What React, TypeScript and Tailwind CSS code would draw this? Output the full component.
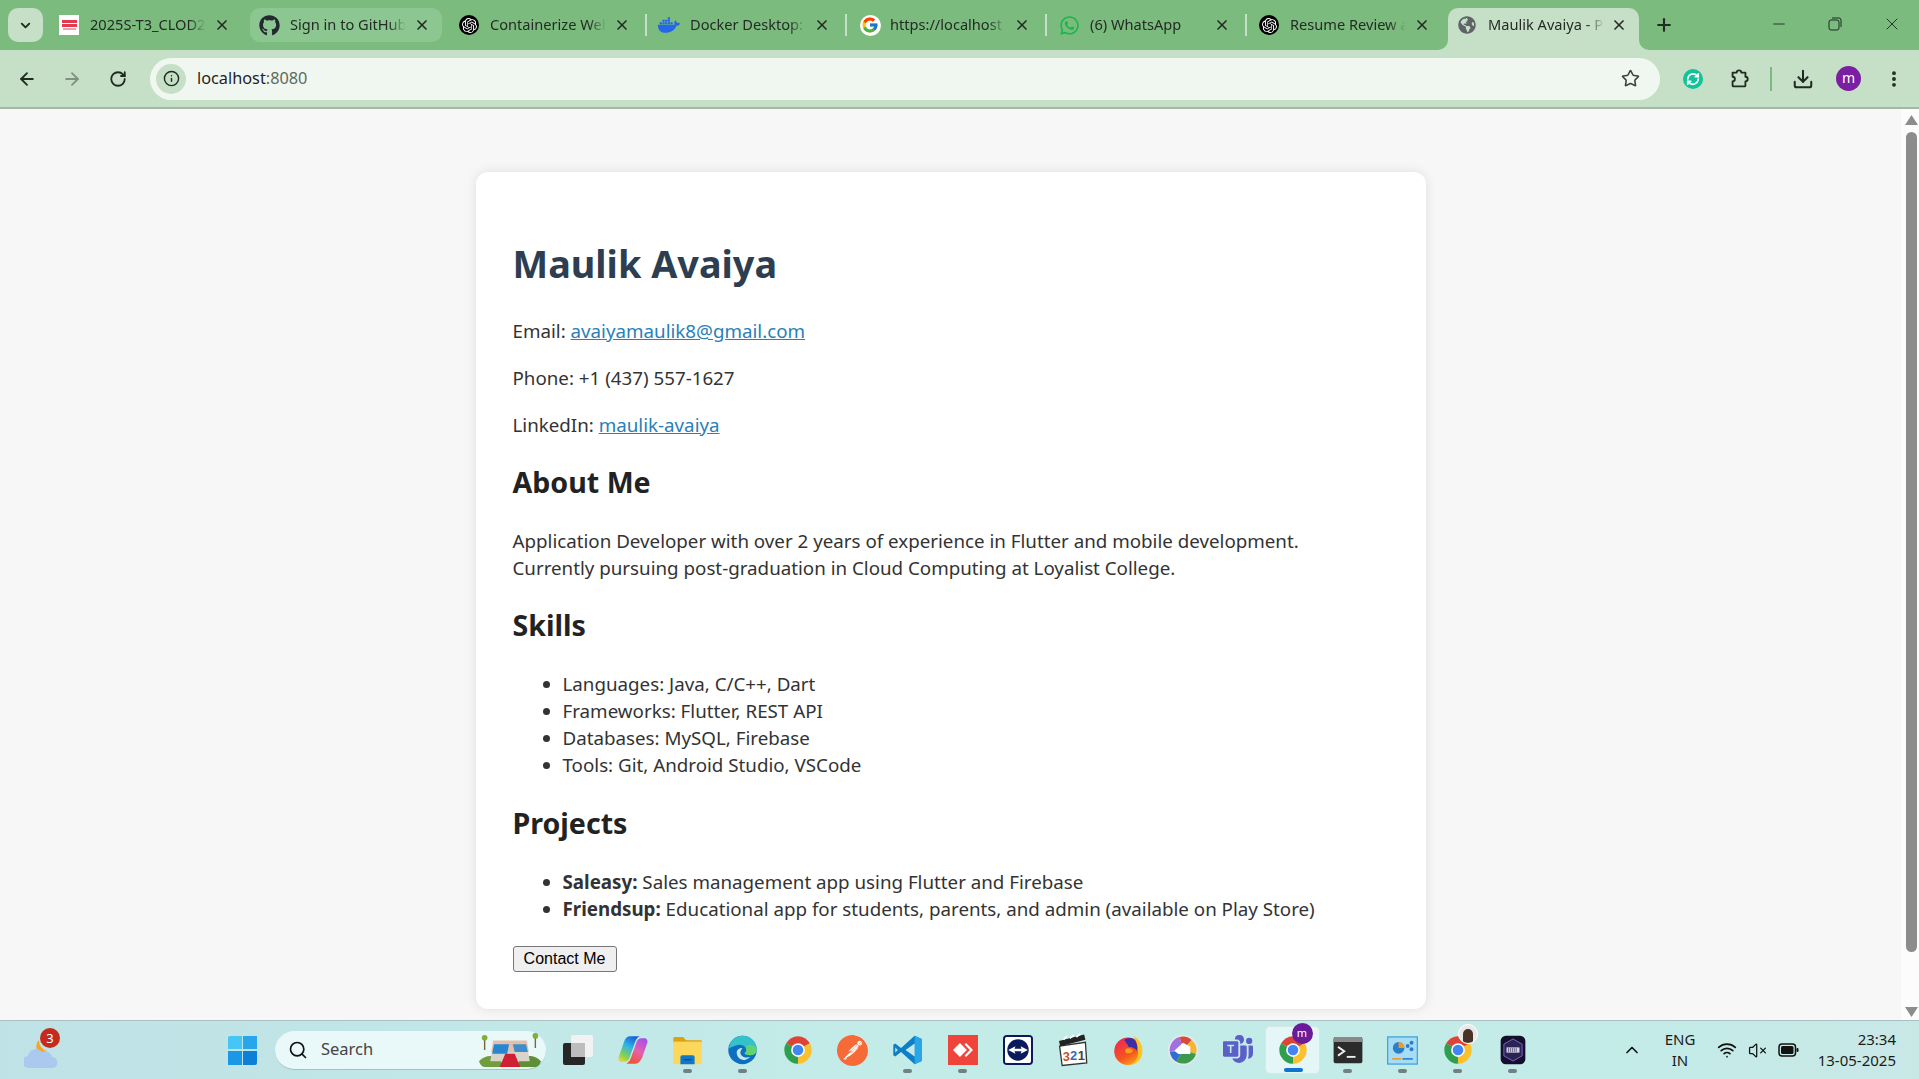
import { ReactNode } from "react";
import { FaGithub, FaDocker, FaWhatsapp, FaGlobeAmericas } from "react-icons/fa";
import { FcGoogle } from "react-icons/fc";
import { SiOpenai, SiPostman, SiAnydesk, SiTeamviewer } from "react-icons/si";
import { BsMicrosoftTeams } from "react-icons/bs";
import { ArrowLeft, ArrowRight, RotateCw, RefreshCw, Info, Star, Download, EllipsisVertical, X, Plus, Minus, ChevronDown, ChevronUp, Search, Wifi, VolumeX } from "lucide-react";

function ChromeLogo({ size = 30 }: { size?: number }) {
  return (
    <svg width={size} height={size} viewBox="0 0 48 48">
      <path d="M24 24 L5 13 A22 22 0 0 1 43 13 Z" fill="#db4437" />
      <path d="M24 24 L43 13 A22 22 0 0 1 24 46 Z" fill="#fbc02d" />
      <path d="M24 24 L24 46 A22 22 0 0 1 5 13 Z" fill="#2f9e4f" />
      <circle cx="24" cy="24" r="11" fill="#fff" />
      <circle cx="24" cy="24" r="8.5" fill="#4285f4" />
    </svg>
  );
}

function EdgeLogo() {
  return (
    <svg width="31" height="32" viewBox="0 0 48 48">
      <circle cx="24" cy="24" r="22" fill="#0c6fc0" />
      <path d="M3 22C4 10 13 2 24 2c12 0 22 9 22 21 0 6-5 9-10 9-4 0-8-1-9-3 3-2 4-5 2-8-3-5-10-6-15-4C9 19 5 20 3 22z" fill="#35c1c9" />
      <path d="M33 16c6 1 13 2 13 8 0 6-5 8-10 8-4 0-8-1-9-3 3-2 4-5 2-8z" fill="#62d36e" />
      <path d="M15 28c0 8 7 13 14 11 3-1 5-2 7-4-6 2-13 0-15-5-1-3 1-7 3-9-5 0-9 3-9 7z" fill="#c3eae8" />
    </svg>
  );
}

function FolderLogo() {
  return (
    <svg width="31" height="32" viewBox="0 0 48 48">
      <path d="M2 6a2 2 0 0 1 2-2h13l5 5h24v4H2z" fill="#dca30f" />
      <path d="M2 11h44v35H2z" fill="#fbd75b" />
      <path d="M13 35a3 3 0 0 1 3-3h16a3 3 0 0 1 3 3v11H13z" fill="#0f78c8" />
      <path d="M18 39h12" stroke="#0a4f8c" strokeWidth="2" />
    </svg>
  );
}

function CopilotLogo() {
  return (
    <svg width="32" height="30" viewBox="0 0 48 46">
      <defs>
        <linearGradient id="copilotA" x1="0.7" y1="0" x2="0.2" y2="1">
          <stop offset="0" stopColor="#1a5fd8" />
          <stop offset="0.4" stopColor="#2fb3e8" />
          <stop offset="0.8" stopColor="#8bd24a" />
          <stop offset="1" stopColor="#e8d23a" />
        </linearGradient>
        <linearGradient id="copilotB" x1="0.8" y1="0" x2="0.3" y2="1">
          <stop offset="0" stopColor="#a64fe8" />
          <stop offset="0.5" stopColor="#e85fb0" />
          <stop offset="1" stopColor="#f0552a" />
        </linearGradient>
      </defs>
      <path d="M20 2h14c-4 2-6 6-8 12l-7 20c-1 4-4 7-8 7H6c-3 0-5-4-4-7l8-23C12 5 15 2 20 2z" fill="url(#copilotA)" />
      <path d="M28 44H14c4-2 6-6 8-12l7-20c1-4 4-7 8-7h5c3 0 5 4 4 7l-8 23c-3 6-6 9-10 9z" fill="url(#copilotB)" />
    </svg>
  );
}

function VsCodeLogo() {
  return (
    <svg width="31" height="32" viewBox="0 0 48 48">
      <path d="M35 2 46 7v34l-11 5L14 27 5 34l-3-2V16l3-2 9 7z" fill="#0e7fc7" />
      <path d="M35 2 46 7v34l-11 5z" fill="#29a5e8" />
      <path d="M35 14 21 24l14 10z" fill="#c3eae8" />
      <path d="M5 20v8l4-4z" fill="#c3eae8" />
    </svg>
  );
}

function ClapperLogo() {
  return (
    <svg width="31" height="34" viewBox="0 0 48 52">
      <path d="M4 20 44 14l2 32-38 4z" fill="#fff" stroke="#333" strokeWidth="2" />
      <path d="M3 12 42 2l2 8L5 20z" fill="#222" />
      <path d="M10 10l6-6M20 8l6-5M30 6l6-5" stroke="#fff" strokeWidth="2.5" />
      <text x="9" y="43" fontSize="20" fontWeight="700" fontFamily="Liberation Sans" fill="#c9541f">3</text>
      <text x="20" y="42" fontSize="20" fontWeight="700" fontFamily="Liberation Sans" fill="#2f6fc0">2</text>
      <text x="32" y="41" fontSize="20" fontWeight="700" fontFamily="Liberation Sans" fill="#444">1</text>
    </svg>
  );
}

function FirefoxLogo() {
  return (
    <svg width="30" height="32" viewBox="0 0 48 50">
      <defs>
        <linearGradient id="foxBody" x1="0.2" y1="0.1" x2="0.7" y2="1">
          <stop offset="0" stopColor="#ee2d50" />
          <stop offset="0.6" stopColor="#f6541f" />
          <stop offset="1" stopColor="#ffa31a" />
        </linearGradient>
      </defs>
      <circle cx="24" cy="27" r="22" fill="url(#foxBody)" />
      <path d="M33 2c9 6 14 14 14 24 0 14-10 23-22 23 10-3 15-11 15-21 0-10-3-18-7-26z" fill="#ffc31f" />
      <path d="M18 9c4-3 10-4 14-2 6 4 8 12 6 19-3-4-6-6-11-6-3 0-4-2-3-4-2 0-3-1-3-3-1-1-2-3-3-4z" fill="#3a2fa8" />
      <path d="M21 23c4-2 9-1 11 3-2 4-6 5-10 4-3-1-3-5-1-7z" fill="#f7a01c" />
    </svg>
  );
}

function PicasaLogo() {
  return (
    <svg width="32" height="32" viewBox="0 0 48 48">
      <circle cx="24" cy="24" r="23" fill="#e4e8e8" />
      <path d="M24 24 19 4.6A20 20 0 0 1 37 9z" fill="#d84a38" />
      <path d="M24 24 37 9a20 20 0 0 1 6.5 21z" fill="#f2b632" />
      <path d="M24 24 43.5 30A20 20 0 0 1 14 41.5z" fill="#3c9a4c" />
      <path d="M24 24 14 41.5A20 20 0 0 1 4.3 27z" fill="#2f6fd0" />
      <path d="M24 24 4.3 27A20 20 0 0 1 19 4.6z" fill="#a06fe0" />
      <path d="M24 13l11 6v11H17l-6-5z" fill="#fff" />
    </svg>
  );
}

function TerminalLogo() {
  return (
    <svg width="30" height="28" viewBox="0 0 48 44">
      <rect x="1" y="1" width="46" height="42" rx="3" fill="#2b2b2b" />
      <path d="M1 4a3 3 0 0 1 3-3h40a3 3 0 0 1 3 3v5H1z" fill="#8a8a8a" />
      <path d="M8 17l10 7-10 7" fill="none" stroke="#eee" strokeWidth="3" />
      <path d="M22 33h14" stroke="#eee" strokeWidth="3" />
    </svg>
  );
}

function PanelLogo() {
  return (
    <svg width="31" height="29" viewBox="0 0 48 44">
      <rect x="1" y="1" width="46" height="42" fill="#a6ddf5" stroke="#3fa4e0" strokeWidth="2" />
      <circle cx="18" cy="18" r="9" fill="#2a7fc8" />
      <path d="M18 18V9a9 9 0 0 1 9 9z" fill="#f39a1f" />
      <circle cx="38" cy="10" r="3" fill="#2a7fc8" />
      <circle cx="38" cy="20" r="3" fill="#2a7fc8" />
      <circle cx="32" cy="15" r="3" fill="#2a7fc8" />
      <path d="M8 35h14" stroke="#f39a1f" strokeWidth="2.5" />
      <path d="M24 35h16" stroke="#2a7fc8" strokeWidth="2.5" />
    </svg>
  );
}

function HexLogo() {
  return (
    <svg width="26" height="30" viewBox="0 0 40 46">
      <rect x="1" y="1" width="38" height="44" rx="8" fill="#14102c" />
      <path d="M20 6 34 14v18L20 40 6 32V14z" fill="#2c2450" stroke="#7e5fd8" strokeWidth="1.5" />
      <rect x="10" y="19" width="20" height="8" fill="#d8d8e8" />
      <path d="M13 20v6M16 20v6M19 20v6M22 20v6M25 20v6" stroke="#2c2450" />
    </svg>
  );
}

function ExtensionIcon() {
  return (
    <svg width="22" height="24" viewBox="0 0 24 24" fill="none" stroke="#1f2a20" strokeWidth="2" strokeLinejoin="round">
      <path d="M5 5h4.5a2.5 2.5 0 0 1 5 0H19v4.5a2.5 2.5 0 0 1 0 5V19a1 1 0 0 1-1 1H6a1 1 0 0 1-1-1v-4.5a2.5 2.5 0 0 0 0-5z" />
    </svg>
  );
}

function BatteryIcon() {
  return (
    <svg width="21" height="14" viewBox="0 0 21 14">
      <rect x="1" y="1" width="16.5" height="12" rx="3" fill="none" stroke="#111" strokeWidth="1.5" />
      <rect x="3" y="3" width="12.5" height="8" rx="1.5" fill="#111" />
      <rect x="18.5" y="5" width="2" height="4" rx="1" fill="#111" />
    </svg>
  );
}

function Windows11() {
  return (
    <div className="grid grid-cols-2 gap-[1.5px] w-[29px] h-[29px]">
      <span className="bg-[#45c6f7] rounded-tl-[2px]" />
      <span className="bg-[#27a6ec]" />
      <span className="bg-[#1b97e8]" />
      <span className="bg-[#0c7fd9] rounded-br-[2px]" />
    </div>
  );
}

function Weather() {
  return (
    <div className="relative w-[34px] h-[38px]">
      <svg width="34" height="38" viewBox="0 0 34 38" className="absolute left-0 top-0">
        <path d="M15 8a9 9 0 0 0 0 13 9 9 0 0 0 8-2A11 11 0 0 1 15 8z" fill="#f5a623" />
        <path d="M5 36a6 6 0 0 1-1-12 8 8 0 0 1 14-4 7 7 0 0 1 10 5 5.5 5.5 0 0 1 0 11z" fill="#a9c9ee" />
      </svg>
      <span className="absolute left-[16px] -top-[4px] w-[20px] h-[20px] rounded-full bg-[#c42b1c] text-white text-[13px] leading-[20px] text-center">3</span>
    </div>
  );
}

function SearchArt() {
  return (
    <svg width="62" height="34" viewBox="0 0 66 36">
      <path d="M0 30c8-8 16-6 22-2l6 8H6C3 36 1 33 0 30z" fill="#6f9e3c" />
      <path d="M66 30c-8-8-16-6-22-2l-6 8h22c3 0 5-3 6-6z" fill="#5c8f36" />
      <path d="M14 18h38l2 12H12z" fill="#d8d4cc" />
      <path d="M15 8h36l2 12H13z" fill="#e4bfae" />
      <path d="M16 12h16l-2 10H14z" fill="#2487cf" />
      <path d="M36 12h14l2 8H38z" fill="#3d8fca" />
      <path d="M28 22h10l6 14H22z" fill="#cf2133" />
      <path d="M6 18V6M60 16V4" stroke="#7a6a3a" strokeWidth="1.5" />
      <circle cx="6" cy="5" r="3" fill="#7fae3c" />
      <circle cx="60" cy="3" r="3" fill="#7fae3c" />
    </svg>
  );
}

const tabs: { title: string; icon: ReactNode; hover?: boolean; sep?: boolean }[] = [
  {
    title: "2025S-T3_CLOD2",
    icon: (
      <div className="w-[20px] h-[20px] bg-white flex flex-col items-center justify-center gap-[1px]">
        <span className="w-[15px] h-[3px] bg-[#e43a50]" />
        <span className="w-[15px] h-[3px] bg-[#e43a50]" />
        <span className="w-[13px] h-[2px] bg-[#f0a0aa]" />
      </div>
    ),
  },
  { title: "Sign in to GitHub", icon: <FaGithub size={21} color="#24292f" />, hover: true },
  { title: "Containerize Web", icon: <div className="w-[20px] h-[20px] rounded-full bg-black flex items-center justify-center"><SiOpenai size={15} color="#fff" /></div> },
  { title: "Docker Desktop:", icon: <FaDocker size={22} color="#2468e8" />, sep: true },
  { title: "https://localhost", icon: <span className="ml-[2px] w-[21px] h-[21px] rounded-full bg-white flex items-center justify-center"><FcGoogle size={18} /></span>, sep: true },
  { title: "(6) WhatsApp", icon: <FaWhatsapp size={21} color="#12b84a" />, sep: true },
  { title: "Resume Review a", icon: <div className="w-[20px] h-[20px] rounded-full bg-black flex items-center justify-center"><SiOpenai size={15} color="#fff" /></div>, sep: true },
];

function Tab({ title, icon, hover, sep }: { title: string; icon: ReactNode; hover?: boolean; sep?: boolean }) {
  return (
    <div className="relative w-[200px] h-[34px] flex items-center shrink-0">
      {sep && <span className="absolute left-[-1px] top-[6px] h-[22px] w-[2px] bg-[#c5e0c6]" />}
      {hover && <span className="absolute left-[4px] right-[4px] top-0 bottom-0 rounded-[10px] bg-[#8cc791]" />}
      <span className="relative w-[46px] flex justify-center shrink-0">{icon}</span>
      <span className="relative w-[116px] -ml-[2px] overflow-hidden whitespace-nowrap text-[14.6px] text-[#252b26] [mask-image:linear-gradient(to_right,black_85%,transparent)]">{title}</span>
      <X size={16} strokeWidth={2.5} color="#252b26" className="absolute left-[168px]" />
    </div>
  );
}

function ActiveTab() {
  return (
    <div className="relative w-[191px] h-[42px] ml-[2px] self-start bg-[#c5e0c6] rounded-t-[10px] shrink-0">
      <svg width="10" height="10" viewBox="0 0 10 10" className="absolute -left-[10px] bottom-0">
        <path d="M10 0v10H0a10 10 0 0 0 10-10z" fill="#c5e0c6" />
      </svg>
      <svg width="10" height="10" viewBox="0 0 10 10" className="absolute -right-[10px] bottom-0">
        <path d="M0 0v10h10A10 10 0 0 1 0 0z" fill="#c5e0c6" />
      </svg>
      <div className="h-[34px] flex items-center">
        <span className="w-[40px] pl-[10px] shrink-0"><FaGlobeAmericas size={18} color="#5f6368" /></span>
        <span className="w-[116px] overflow-hidden whitespace-nowrap text-[14.6px] text-[#252b26] [mask-image:linear-gradient(to_right,black_85%,transparent)]">Maulik Avaiya - Portfolio</span>
      </div>
      <X size={16} strokeWidth={2.5} color="#252b26" className="absolute left-[163px] top-[9px]" />
    </div>
  );
}

function TabStrip() {
  return (
    <div className="h-[50px] shrink-0 bg-[#7bbb7e] flex items-start pt-[8px] pl-[8px]">
      <div className="w-[35px] h-[34px] rounded-[10px] bg-[#c5e0c6] flex items-center justify-center shrink-0 mr-[3px]">
        <ChevronDown size={15} strokeWidth={3} color="#1f2a20" />
      </div>
      {tabs.map((t) => (
        <Tab key={t.title} {...t} />
      ))}
      <div className="-mt-[8px] pt-[8px] h-[50px]"><ActiveTab /></div>
      <Plus size={20} strokeWidth={2.6} color="#252b26" className="ml-[15px] mt-[7px] shrink-0" />
      <div className="ml-auto -mt-[8px] h-[48px] flex items-center">
        <Minus size={18} strokeWidth={1.2} color="#1f2a20" className="mr-[40px]" />
        <svg width="14" height="14" viewBox="0 0 14 14" className="mr-[40px]">
          <rect x="1" y="3" width="10" height="10" rx="2" fill="none" stroke="#1f2a20" />
          <path d="M4 1h7a2 2 0 0 1 2 2v7" fill="none" stroke="#1f2a20" />
        </svg>
        <X size={20} strokeWidth={1.1} color="#1f2a20" className="mr-[17px]" />
      </div>
    </div>
  );
}

function Toolbar() {
  return (
    <div className="h-[59px] shrink-0 bg-[#c5e0c6] border-b-2 border-[#a3b8a5] flex items-center">
      <ArrowLeft size={20} strokeWidth={2.2} color="#1f2a20" className="ml-[17px]" />
      <ArrowRight size={20} strokeWidth={2.2} color="#7f9282" className="ml-[25px]" />
      <RotateCw size={18} strokeWidth={2.4} color="#1f2a20" className="ml-[27px]" />
      <div className="ml-[23px] w-[1510px] h-[42px] rounded-full bg-[#f0f7f1] flex items-center pl-[6px] pr-[20px]">
        <span className="w-[30px] h-[30px] rounded-full bg-[#c5e0c6] flex items-center justify-center">
          <Info size={17} strokeWidth={2} color="#1f2a20" />
        </span>
        <span className="ml-[11px] text-[16.3px] text-[#1f1f1f]">localhost<span className="text-[#5d6a60]">:8080</span></span>
        <Star size={19} strokeWidth={2} color="#3c4043" className="ml-auto" />
      </div>
      <div className="ml-[23px] w-[20px] h-[20px] rounded-full bg-[#12c29a] flex items-center justify-center">
        <RefreshCw size={14} strokeWidth={3} color="#fff" />
      </div>
      <span className="ml-[25px]"><ExtensionIcon /></span>
      <span className="ml-[20px] w-[2px] h-[24px] bg-[#7bbb7e]" />
      <Download size={22} strokeWidth={2.2} color="#1f2a20" className="ml-[20px]" />
      <span className="ml-[22px] w-[25px] h-[25px] rounded-full bg-[#7b1fa2] text-white text-[14px] leading-[23px] text-center">m</span>
      <EllipsisVertical size={20} strokeWidth={2.6} color="#1f2a20" className="ml-[23px]" />
    </div>
  );
}

function Scrollbar() {
  return (
    <div className="w-[18px] shrink-0 bg-[#fcfcfc] flex flex-col items-center pl-[3px]">
      <svg width="13" height="10" viewBox="0 0 13 10" className="mt-[6px]">
        <path d="M6.5 0l6.5 10H0z" fill="#8c8c8c" />
      </svg>
      <div className="w-[11px] flex-1 mt-[7px] mb-[55px] rounded-full bg-[#8c8c8c]" />
      <svg width="13" height="10" viewBox="0 0 13 10" className="mb-[3px]">
        <path d="M6.5 10L0 0h13z" fill="#8c8c8c" />
      </svg>
    </div>
  );
}

function Resume() {
  return (
    <div className="w-[950px] mx-auto mt-[63px] h-fit bg-white rounded-[12px] shadow-[0_0_12px_rgba(0,0,0,0.1)] px-[37px] pt-[37px] pb-[37px] font-['Noto_Sans',sans-serif] text-[18.75px] leading-[27px] text-[#333]">
      <h1 className="mt-[28px] text-[37.8px] leading-[54px] font-bold text-[#2c3e50]">Maulik Avaiya</h1>
      <p className="mt-[26px]">Email: <a className="text-[#2980b9] underline" href="#">avaiyamaulik8@gmail.com</a></p>
      <p className="mt-[20px]">Phone: +1 (437) 557-1627</p>
      <p className="mt-[20px]">LinkedIn: <a className="text-[#2980b9] underline" href="#">maulik-avaiya</a></p>
      <h2 className="mt-[24px] text-[28.6px] leading-[40px] font-bold text-[#222]">About Me</h2>
      <p className="mt-[25px]">Application Developer with over 2 years of experience in Flutter and mobile development.<br />Currently pursuing post-graduation in Cloud Computing at Loyalist College.</p>
      <h2 className="mt-[24px] text-[28.6px] leading-[40px] font-bold text-[#222]">Skills</h2>
      <ul className="mt-[25px] pl-[50px] list-disc">
        <li>Languages: Java, C/C++, Dart</li>
        <li>Frameworks: Flutter, REST API</li>
        <li>Databases: MySQL, Firebase</li>
        <li>Tools: Git, Android Studio, VSCode</li>
      </ul>
      <h2 className="mt-[25px] text-[28.6px] leading-[40px] font-bold text-[#222]">Projects</h2>
      <ul className="mt-[25px] pl-[50px] list-disc">
        <li><strong>Saleasy:</strong> Sales management app using Flutter and Firebase</li>
        <li><strong>Friendsup:</strong> Educational app for students, parents, and admin (available on Play Store)</li>
      </ul>
      <button className="block mt-[24px] w-[104px] h-[26px] bg-[#efefef] border border-[#767676] rounded-[3px] font-['Liberation_Sans',sans-serif] text-[16px] leading-[24px] text-black">Contact Me</button>
    </div>
  );
}

const taskIcons: { icon: ReactNode; dot?: boolean; active?: boolean }[] = [
  {
    icon: (
      <div className="relative w-[30px] h-[30px]">
        <span className="absolute right-0 top-0 w-[22px] h-[22px] bg-[#f2f2f2] rounded-[2px]" />
        <span className="absolute left-0 bottom-0 w-[22px] h-[22px] bg-[#262626] rounded-[2px]" />
        <span className="absolute left-[8px] top-[8px] w-[14px] h-[14px] bg-[#bdbdbd]" />
      </div>
    ),
  },
  { icon: <CopilotLogo /> },
  { icon: <FolderLogo />, dot: true },
  { icon: <EdgeLogo />, dot: true },
  { icon: <ChromeLogo /> },
  { icon: <div className="relative w-[30px] h-[30px] rounded-full bg-white flex items-center justify-center"><SiPostman size={31} color="#f76936" className="absolute -left-[0.5px] -top-[0.5px]" /></div> },
  { icon: <VsCodeLogo />, dot: true },
  { icon: <div className="w-[30px] h-[30px] bg-[#ef443b] flex items-center justify-center"><SiAnydesk size={20} color="#fff" /></div>, dot: true },
  { icon: <div className="w-[30px] h-[30px] rounded-[4px] bg-[#0a1a5c] flex items-center justify-center"><SiTeamviewer size={26} color="#fff" /></div> },
  { icon: <ClapperLogo /> },
  { icon: <FirefoxLogo /> },
  { icon: <PicasaLogo /> },
  { icon: <BsMicrosoftTeams size={30} color="#5b5fc7" /> },
  {
    icon: (
      <div className="relative">
        <ChromeLogo />
        <span className="absolute -right-[5px] -top-[12px] w-[21px] h-[21px] rounded-full bg-[#6a1b9a] text-white text-[11px] leading-[19px] text-center">m</span>
      </div>
    ),
    active: true,
  },
  { icon: <TerminalLogo />, dot: true },
  { icon: <PanelLogo />, dot: true },
  {
    icon: (
      <div className="relative">
        <ChromeLogo />
        <span className="absolute -right-[5px] -top-[11px] w-[20px] h-[20px] rounded-full bg-[#e8e8e8] border border-white overflow-hidden flex items-end justify-center">
          <span className="w-[10px] h-[14px] rounded-t-full bg-[#4a3326]" />
        </span>
      </div>
    ),
    dot: true,
  },
  { icon: <HexLogo />, dot: true },
];

function Taskbar() {
  return (
    <div className="h-[59px] shrink-0 border-t border-[#a9bfc0] bg-[linear-gradient(to_right,#bfe2e6,#c3ebe8_45%,#c3ebe8_85%,#c8e8e6)] flex items-center font-['Noto_Sans',sans-serif] text-[#1c1c1c]">
      <div className="ml-[24px] mt-[2px]"><Weather /></div>
      <div className="ml-[170px]"><Windows11 /></div>
      <div className="ml-[18px] w-[271px] h-[39px] rounded-full bg-[#e9f8f8] border-b border-[#a9bfc0] flex items-center pl-[13px] pr-[5px]">
        <Search size={20} strokeWidth={2} color="#111" />
        <span className="ml-[13px] text-[16.5px] text-[#444]">Search</span>
        <span className="ml-auto"><SearchArt /></span>
      </div>
      <div className="ml-[4px] flex">
        {taskIcons.map((t, i) => (
          <div key={i} className={`relative w-[55px] h-[48px] flex items-center justify-center rounded-[5px] ${t.active ? "bg-[#e4f6f5] border border-[#d5e8e7]" : ""}`}>
            {t.icon}
            {t.dot && <span className="absolute bottom-[1px] left-[23px] w-[9px] h-[4px] rounded-full bg-[#6f8183]" />}
            {t.active && <span className="absolute bottom-[1px] left-[18px] w-[19px] h-[4px] rounded-full bg-[#0b75cf]" />}
          </div>
        ))}
      </div>
      <ChevronUp size={20} strokeWidth={2} color="#111" className="ml-[82px]" />
      <div className="ml-[18px] w-[40px] text-center text-[15px] leading-[21px]">ENG<br />IN</div>
      <Wifi size={20} strokeWidth={2} color="#111" className="ml-[17px]" />
      <VolumeX size={19} strokeWidth={1.6} color="#111" className="ml-[11px]" />
      <span className="ml-[11px]"><BatteryIcon /></span>
      <div className="ml-auto mr-[23px] text-right text-[15px] leading-[21px]">23:34<br />13-05-2025</div>
    </div>
  );
}

export default function App() {
  return (
    <div className="w-[1919px] h-[1079px] flex flex-col overflow-hidden font-['Noto_Sans',sans-serif]">
      <TabStrip />
      <Toolbar />
      <div className="flex-1 min-h-0 flex bg-[#f7f7f7]">
        <div className="flex-1 overflow-hidden"><Resume /></div>
        <Scrollbar />
      </div>
      <Taskbar />
    </div>
  );
}
